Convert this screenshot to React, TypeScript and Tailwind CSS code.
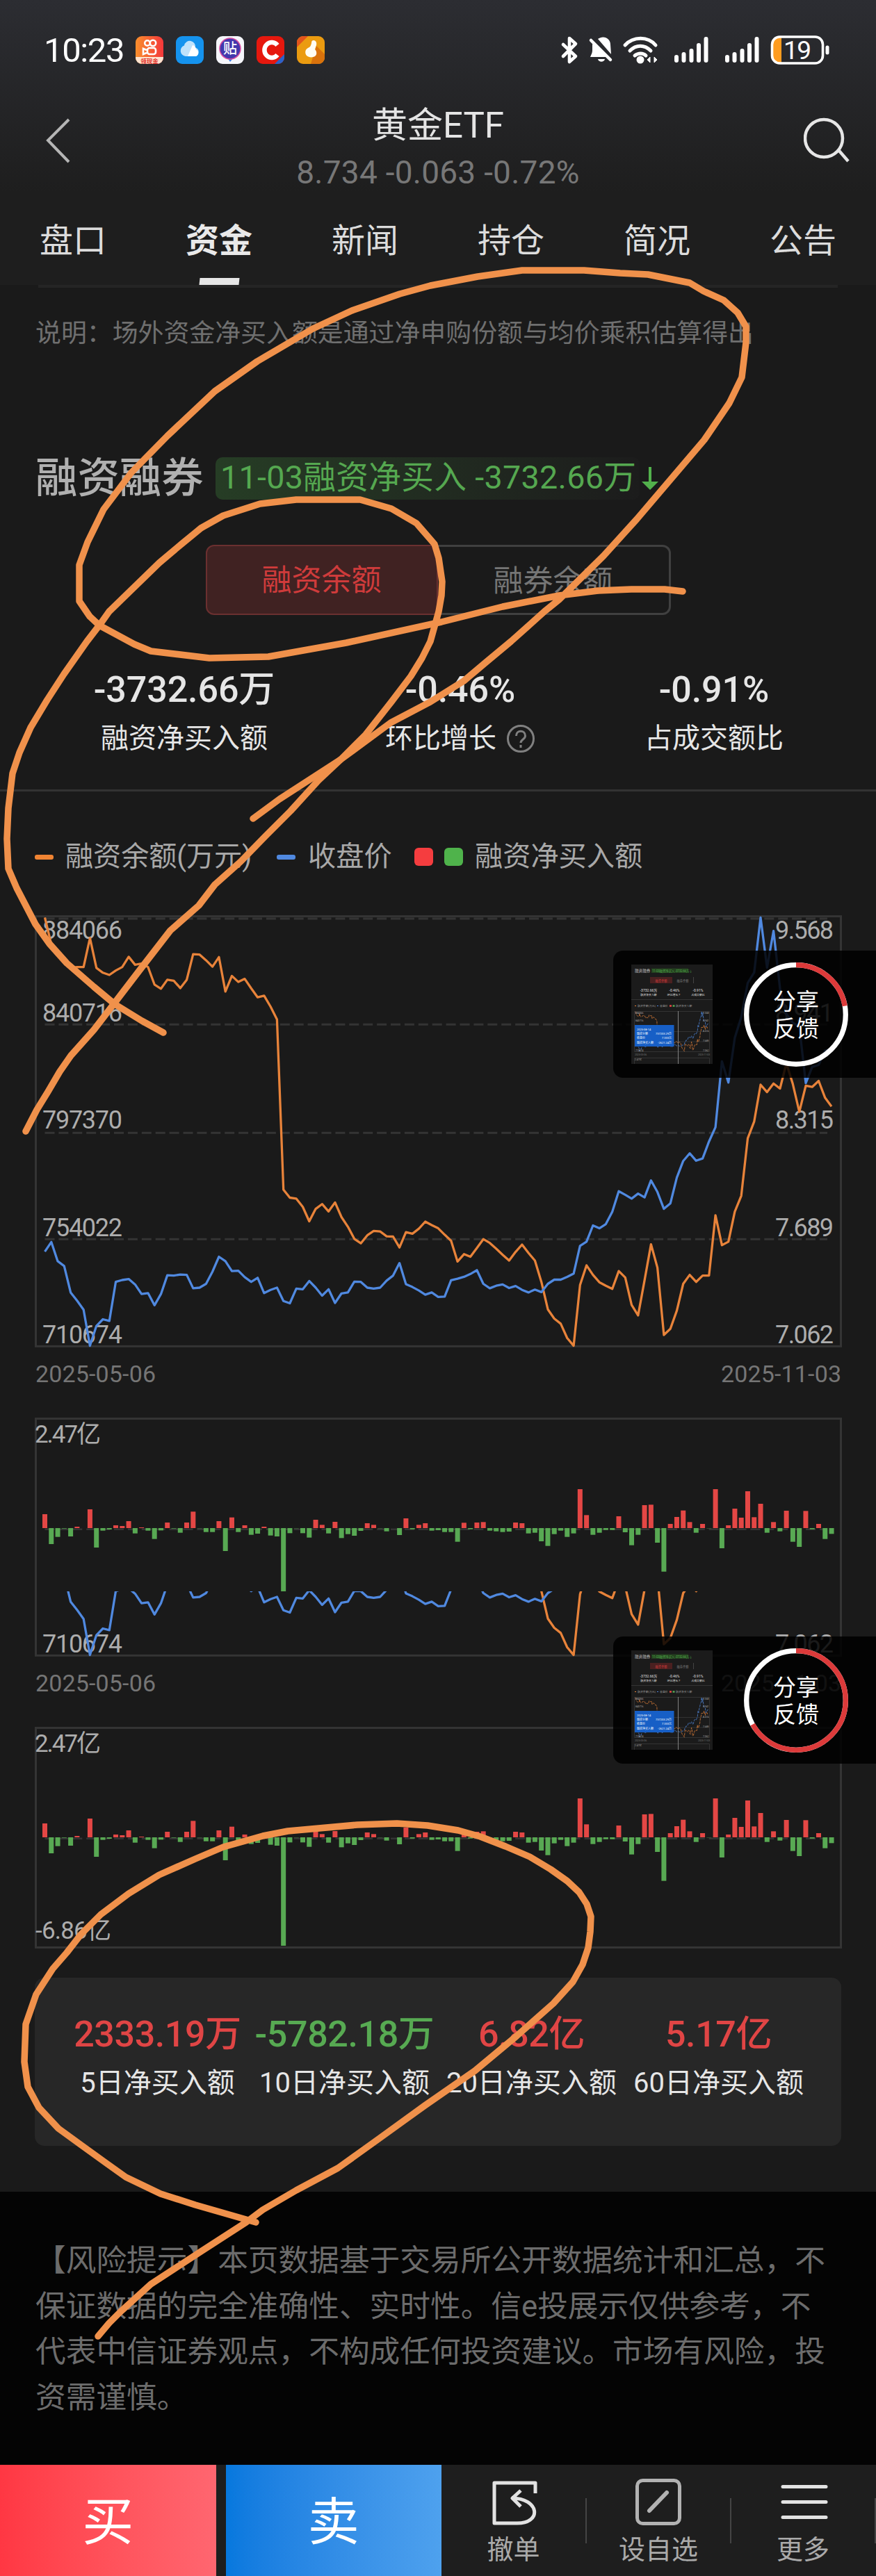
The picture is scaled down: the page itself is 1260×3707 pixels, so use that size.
import type { ReactNode } from 'react'

const ORANGE = '#e8833a'
const BLUE = '#5089e0'
const GRID = '#343434'

// plot levels, one per trading day, measured down from the top of the chart
const marginBalance = [
  88, 172, 205, 226, 246, 243, 243, 152, 246, 261, 268, 254, 243, 211, 236, 232, 243, 298, 311, 283, 286,
  309, 283, 203, 204, 222, 242, 212, 320, 271, 290, 280, 310, 338, 333, 367, 407, 941, 966, 969, 995, 1040,
  1001, 986, 1009, 981, 1027, 1057, 1095, 1109, 1084, 1070, 1072, 1087, 1088, 1122, 1074, 1079, 1063, 1041,
  1052, 1062, 1082, 1101, 1166, 1143, 1151, 1124, 1096, 1108, 1126, 1145, 1163, 1136, 1113, 1139, 1163,
  1230, 1316, 1345, 1361, 1406, 1430, 1240, 1178, 1208, 1231, 1242, 1252, 1196, 1216, 1302, 1335, 1225,
  1112, 1185, 1396, 1377, 1320, 1236, 1208, 1230, 1210, 1210, 1021, 1115, 1104, 1010, 960, 780, 727, 612,
  635, 608, 624, 545, 610, 697, 615, 619, 600, 653, 680,
]

const closePrice = [
  1135, 1105, 1165, 1180, 1263, 1289, 1317, 1430, 1368, 1347, 1352, 1230, 1224, 1221, 1238, 1268, 1265,
  1303, 1268, 1209, 1210, 1207, 1208, 1250, 1248, 1236, 1198, 1151, 1165, 1196, 1195, 1215, 1230, 1217,
  1265, 1255, 1248, 1290, 1297, 1251, 1253, 1227, 1248, 1273, 1253, 1296, 1266, 1263, 1229, 1230, 1248,
  1251, 1248, 1226, 1210, 1171, 1237, 1246, 1257, 1270, 1263, 1277, 1276, 1225, 1220, 1214, 1205, 1193,
  1236, 1250, 1242, 1238, 1249, 1243, 1255, 1263, 1254, 1262, 1236, 1223, 1223, 1214, 1204, 1117, 1104,
  1053, 1062, 1049, 1010, 946, 957, 969, 953, 965, 912, 948, 1001, 984, 903, 851, 827, 850, 843, 790, 745,
  539, 605, 465, 400, 293, 260, 88, 245, 130, 310, 390, 418, 430, 607, 556, 550, 505, 500,
]

const netBuy = [
  60, -69, -38, -2, -36, 6, 0, 81, -84, -11, -6, 12, 9, 30, -23, 3, -11, -47, -10, 24, -2, -20, 24, 71, -1,
  -17, -17, 30, -99, 46, -17, 12, -29, -24, 6, -32, -36, -468, -22, -1, -22, -41, 36, 14, -23, 27, -43, -26,
  -33, -12, 21, 14, -1, -14, 0, -30, 42, -5, 14, 21, -11, -9, -17, -17, -59, 23, -5, 24, 26, -11, -14, -17,
  -15, 24, 21, -23, -20, -57, -77, -26, -11, -38, -23, 168, 56, -29, -20, -8, -8, 51, -18, -74, -29, 99,
  101, -63, -188, 18, 48, 76, 26, -20, 18, -1, 168, -87, 12, 84, 45, 159, 47, 105, -20, 26, -14, 75, -59,
  -81, 74, -5, 18, -47, -25,
]

const axisLabels = [
  { left: '884066', right: '9.568', y: 70.5 },
  { left: '840716', right: '8.941', y: 190 },
  { left: '797370', right: '8.315', y: 343.5 },
  { left: '754022', right: '7.689', y: 498.5 },
  { left: '710674', right: '7.062', y: 652.5 },
]

const tabs = ['盘口', '资金', '新闻', '持仓', '简况', '公告']

const summary = [
  { value: '2333.19万', label: '5日净买入额', up: true },
  { value: '-5782.18万', label: '10日净买入额', up: false },
  { value: '6.82亿', label: '20日净买入额', up: true },
  { value: '5.17亿', label: '60日净买入额', up: true },
]

const riskLines = [
  '【风险提示】本页数据基于交易所公开数据统计和汇总，不',
  '保证数据的完全准确性、实时性。信e投展示仅供参考，不',
  '代表中信证券观点，不构成任何投资建议。市场有风险，投',
  '资需谨慎。',
]

const marks = [
  '364,1178 402,1150 490,1093 562,1040 619,1010 667,980 699,953 735,923 783,880 804,863 868,800 916,747 956,700 1013,633 1049,580 1067,543 1073,493 1073,470 1061,450 1041,432 1012,419 992,407 932,395 892,393 840,389 751,389 687,398 619,411 575,423 506,447 450,473 370,520 309,563 241,627 189,680 149,733 126,780 114,813 114,865 129,887 143,900 193,927 217,937 301,947 386,945 498,925 635,895 723,873 804,857 860,850 908,848 956,848 982,851',
  '37,1628 53,1597 69,1571 86,1542 102,1519 135,1482 165,1443 204,1392 245,1339 286,1303 309,1273 346,1240 382,1203 418,1167 458,1123 490,1093 526,1057 563,1010 591,973 607,947 619,923 631,880 635,857 636,837 631,803 625,783 599,753 563,732 518,719 426,719 374,725 321,742 289,760 261,783 229,810 193,845 157,880 145,897 125,923 92,970 68,1007 44,1047 28,1083 18,1113 12,1163 10,1207 12,1250 24,1278 37,1303 51,1330 71,1358 96,1386 135,1420 165,1445 204,1469 235,1486',
  '368,3198 281,3173 231,3157 181,3133 153,3113 117,3087 84,3063 56,3033 40,3003 35,2967 37,2913 52,2870 76,2833 96,2810 117,2783 145,2755 185,2725 229,2698 281,2675 321,2658 378,2642 414,2635 514,2626 571,2624 615,2627 659,2634 691,2643 727,2657 762,2672 792,2690 816,2707 833,2723 844,2740 850,2758 849,2780 846,2803 838,2827 824,2852 796,2883 743,2930 683,2980 611,3030 546,3077 486,3120 426,3152 378,3180 354,3198 289,3240 217,3287 173,3327 157,3343 141,3362',
]

const dayX = (index: number) => 64.5 + index * 9.275

const toPoints = (levels: number[]) =>
  levels.map((level, index) => `${dayX(index).toFixed(1)},${(level / 2.178).toFixed(1)}`).join(' ')

function StatusBar() {
  return (
    <div className="flex h-[120px] items-start pt-[44px] pr-[67px] pl-[63px]">
      <div className="w-[132px] text-[49px] leading-[58px] tracking-[-1.4px] text-white">10:23</div>
      <div className="mt-2 flex gap-[18px]">
        <svg width="40" height="40" viewBox="0 0 40 40">
          <defs>
            <linearGradient id="ks" x1="0" y1="0" x2="1" y2="0">
              <stop offset="0" stopColor="#f98f2c" />
              <stop offset="1" stopColor="#f4373b" />
            </linearGradient>
          </defs>
          <rect width="40" height="40" rx="9" fill="url(#ks)" />
          <g fill="none" stroke="#fff" strokeWidth="2.6">
            <circle cx="17" cy="10" r="3.8" />
            <circle cx="25" cy="10" r="4.2" />
            <rect x="17" y="17" width="12" height="9" rx="3" />
            <path d="M16 20l-5-2v8l5-2" />
          </g>
          <path d="M0 30h40v1a9 9 0 0 1-9 9H9a9 9 0 0 1-9-9z" fill="#fde3cf" />
          <text x="20" y="38.5" fontSize="8.5" fontWeight="700" fill="#e2322b" textAnchor="middle">
            领现金
          </text>
        </svg>
        <svg width="40" height="40" viewBox="0 0 40 40">
          <rect width="40" height="40" rx="9" fill="#1593ee" />
          <path d="M14 29a8 8 0 0 1-2-15.500a8 8 0 0 1 16 3a6.500 6.500 0 0 1 0 12.500z" fill="#bfe2fb" />
          <path d="M17 29l7-16a7 7 0 0 1 5 6a5.500 5.500 0 0 1 0 10z" fill="#fff" />
        </svg>
        <svg width="40" height="40" viewBox="0 0 40 40">
          <rect width="40" height="40" rx="9" fill="#f5f6fb" />
          <path d="M16 31h9l-5 6z" fill="#3f7be6" />
          <circle cx="20" cy="18" r="15" fill="#4338ad" stroke="#d84ea0" strokeWidth="1.5" />
          <text x="20" y="25" fontSize="20" fontWeight="500" fill="#fff" textAnchor="middle">
            贴
          </text>
        </svg>
        <svg width="40" height="40" viewBox="0 0 40 40">
          <rect width="40" height="40" rx="9" fill="#e6180e" />
          <path d="M40 26v5a9 9 0 0 1-9 9h-5z" fill="#2b62c9" />
          <path d="M30 13a10.500 11 0 1 0 0 14" fill="none" stroke="#fff" strokeWidth="6.500" />
        </svg>
        <svg width="40" height="40" viewBox="0 0 40 40">
          <rect width="40" height="40" rx="9" fill="#eb9b10" />
          <path d="M28 14l12 12v5a9 9 0 0 1-9 9H20z" fill="#d9720c" />
          <path d="M0 16V9a9 9 0 0 1 9-9h7z" fill="#e2541c" />
          <path
            d="M24 6c3 0 5 3 4 7l-2 6c3 3 3 8 0 10s-9 2-12-1c-3-4-2-9 2-11c3-1 4-3 5-7c0-3 1-4 3-4z"
            fill="#fffdf3"
          />
        </svg>
      </div>
      <svg className="mt-[6px] ml-auto" width="390" height="46" viewBox="0 0 390 46">
        <path
          d="M7 14l18 17l-9 8V5l9 8L7 31"
          fill="none"
          stroke="#fff"
          strokeWidth="4.600"
          strokeLinejoin="round"
          strokeLinecap="round"
        />
        <path d="M49 13v9c0 5-2 7-3 10h26zM57 6c8-6 18-1 18 8l1 14z" fill="#fff" />
        <path d="M57 35h10c-1 5-9 5-10 0z" fill="#fff" />
        <path d="M47 8l28 28" stroke="#fff" strokeWidth="4.500" strokeLinecap="round" />
        <g fill="none" stroke="#fff" strokeWidth="5" strokeLinecap="round">
          <path d="M96 15c12-13 33-13 44 0" />
          <path d="M103 23c9-9 21-9 30 0" />
          <path d="M110 30c5-4 12-4 16 0" />
        </g>
        <circle cx="118" cy="36" r="5.500" fill="#fff" />
        <path d="M128 36l4-4v8zM142 36l-4-4v8z" fill="#fff" stroke="#fff" />
        <g stroke="#fff" strokeWidth="6" strokeLinecap="round">
          <path d="M170 32v5M180.500 28v9M191.500 23v14M202 15v22M212.500 6v31" />
          <path d="M243 32v5M253.500 28v9M264.500 23v14M275 15v22M285.500 6v31" />
        </g>
        <path d="M321 4h-5a7 7 0 0 0-7 7v22a7 7 0 0 0 7 7h5z" fill="#ff9c1f" />
        <rect x="307.500" y="3" width="73" height="38" rx="11" fill="none" stroke="#fff" strokeWidth="3.600" />
        <path d="M387 18v8" stroke="#fff" strokeWidth="5" strokeLinecap="round" />
        <text x="324" y="35" fontSize="37" fill="#fff" textLength="40">
          19
        </text>
      </svg>
    </div>
  )
}

function Header() {
  return (
    <div className="flex h-[157px] justify-between pt-[30px] pr-[36px] pl-[64px]">
      <svg className="mt-[18px]" width="40" height="70" viewBox="0 0 40 70">
        <path d="M35 4L5 34l30 31" fill="none" stroke="#b5b5b5" strokeWidth="4" />
      </svg>
      <div className="flex flex-col items-center gap-[7px]">
        <h1 className="text-[51px] leading-[61px] text-[#e4e4e4]">黄金ETF</h1>
        <p className="text-[46px] leading-[60px] tracking-[0.25px] text-[#777777]">8.734 -0.063 -0.72%</p>
      </div>
      <svg className="mt-[16px]" width="68" height="72" viewBox="0 0 68 72">
        <circle cx="29" cy="33" r="27" fill="none" stroke="#e6e6e6" strokeWidth="4.500" />
        <path d="M51 51l13 15" stroke="#e6e6e6" strokeWidth="4.500" />
      </svg>
    </div>
  )
}

function Tabs() {
  return (
    <div className="grid h-[133px] grid-cols-6 bg-[#1e1e1e] pt-[40px]">
      {tabs.map((tab) => (
        <div key={tab} className="flex flex-col items-center">
          <span
            className={`text-[48px] leading-[60px] ${
              tab === '资金' ? 'font-bold text-[#e9e9e9]' : 'text-[#dcdcdc]'
            }`}
          >
            {tab}
          </span>
          {tab === '资金' && <span className="mt-[23px] h-[10px] w-[57px] -skew-x-6 bg-[#e6e6e6]" />}
        </div>
      ))}
    </div>
  )
}

function Stat({ value, children }: { value: string; children: ReactNode }) {
  return (
    <div className="flex flex-col items-center gap-[10px] text-[#e6e6e6]">
      <span className="text-[52px] leading-[60px] font-medium tracking-[-0.100px]">{value}</span>
      <span className="flex items-center text-[40px] leading-[60px] whitespace-nowrap">{children}</span>
    </div>
  )
}

function Legend() {
  return (
    <div className="mt-[64px] flex h-[60px] items-center pl-[50px] text-[40.2px] leading-[60px] whitespace-nowrap text-[#a8a8a8]">
      <span className="h-[7px] w-[27px] rounded-[3px] bg-[#f08433]" />
      <span className="ml-[17px] w-[304px] tracking-[-0.1px]">融资余额(万元)</span>
      <span className="h-[7px] w-[27px] rounded-[3px] bg-[#5089e0]" />
      <span className="ml-[18px] w-[153px]">收盘价</span>
      <span className="h-[26px] w-[27px] rounded-[6px] bg-[#f53d3f]" />
      <span className="ml-[16px] h-[26px] w-[27px] rounded-[6px] bg-[#4fb34b]" />
      <span className="ml-[17px]">融资净买入额</span>
    </div>
  )
}

function PriceChart({ from = 0 }: { from?: number }) {
  const height = 720 - from
  return (
    <svg className="block" width="1260" height={height} viewBox={`0 ${from} 1260 ${height}`}>
      <rect x="51.500" y="38.600" width="1158" height="618.800" fill="none" stroke={GRID} strokeWidth="3" />
      {[42, 194.2, 350.3, 503.2].map((y) => (
        <path key={y} d={`M64.500 ${y}H1190`} stroke={GRID} strokeWidth="3" strokeDasharray="14 5.900" />
      ))}
      <g fontSize="36" fill="#adadad">
        {axisLabels
          .filter((label) => label.y > from)
          .map(({ left, right, y }) => (
            <g key={left}>
              <text x="61" y={y} textLength="115">
                {left}
              </text>
              <text x="1115" y={y} textLength="84">
                {right}
              </text>
            </g>
          ))}
      </g>
      <g fontSize="34" fill="#757575">
        <text x="51" y="708.500" textLength="173">
          2025-05-06
        </text>
        <text x="1037" y="708.500" textLength="173">
          2025-11-03
        </text>
      </g>
      <polyline points={toPoints(marginBalance)} fill="none" stroke={ORANGE} strokeWidth="3.300" strokeLinejoin="round" />
      <polyline points={toPoints(closePrice)} fill="none" stroke={BLUE} strokeWidth="3.300" strokeLinejoin="round" />
    </svg>
  )
}

function NetBuyChart({ height }: { height: number }) {
  return (
    <svg className="block" width="1260" height={height} viewBox={`0 0 1260 ${height}`}>
      <rect x="51.500" y="41.500" width="1158" height="316" fill="none" stroke={GRID} strokeWidth="3" />
      <path d="M64.500 200.700H1190" stroke={GRID} strokeWidth="2.500" strokeDasharray="14 5.900" />
      {netBuy.map((amount, index) => (
        <rect
          key={index}
          x={dayX(index) - 3.5}
          y={amount > 0 ? 199 - amount / 3 : 199}
          width="7"
          height={Math.abs(amount) / 3}
          fill={amount > 0 ? '#e44745' : '#58a953'}
        />
      ))}
      <g fontSize="35" fill="#adadad">
        <text x="50" y="76" textLength="95">
          2.47亿
        </text>
        {height > 345 && (
          <text x="51" y="345" textLength="109">
            -6.86亿
          </text>
        )}
      </g>
    </svg>
  )
}

function Thumbnail() {
  return (
    <svg width="117" height="143" viewBox="0 0 117 143">
      <rect width="117" height="143" fill="#1b1b1b" />
      <text x="5" y="11" fontSize="5.600" fill="#bbb">
        融资融券
      </text>
      <rect x="29" y="5.500" width="53" height="6.500" fill="#24401f" />
      <text x="30" y="11" fontSize="4.700" fill="#4fa64a" textLength="58">
        11-03融资净买入 -3732.66万↓
      </text>
      <rect x="27" y="18" width="32" height="9" fill="#4a2020" />
      <text x="43" y="24.500" fontSize="4.200" fill="#cf3b3b" textAnchor="middle">
        融资余额
      </text>
      <text x="74" y="24.500" fontSize="4.200" fill="#777" textAnchor="middle">
        融券余额
      </text>
      <path d="M89.500 18v9" stroke="#444" />
      <g fontSize="5" fill="#e0e0e0" textAnchor="middle">
        <text x="25" y="39">-3732.66万</text>
        <text x="62" y="39">-0.46%</text>
        <text x="96" y="39">-0.91%</text>
        <g fontSize="3.900">
          <text x="25" y="45">融资净买入额</text>
          <text x="61" y="45">环比增长 ?</text>
          <text x="96" y="45">占成交额比</text>
        </g>
      </g>
      <path d="M0 50.500h117" stroke="#333" />
      <path d="M5 59.500h2" stroke={ORANGE} />
      <path d="M37 59.500h2" stroke={BLUE} />
      <path d="M55 59.500h3" stroke="#e44745" strokeWidth="2.500" />
      <path d="M59.500 59.500h3" stroke="#58a953" strokeWidth="2.500" />
      <g fontSize="3.900" fill="#999">
        <text x="9" y="61">融资余额(万元)</text>
        <text x="41" y="61">收盘价</text>
        <text x="64" y="61">融资净买入额</text>
      </g>
      <path d="M4.500 67.500h108v58H4.500zM4.500 143v-8.500h108v8.500M4 96.500h108M4 111h108" fill="none" stroke="#333" />
      <g transform="translate(0 64) scale(.0925)" fill="none" strokeWidth="8" strokeDasharray="40 14">
        <polyline points={toPoints(marginBalance)} stroke={ORANGE} />
        <polyline points={toPoints(closePrice)} stroke={BLUE} />
      </g>
      <g fontSize="3.400" fill="#aaa">
        <text x="6" y="71">884066</text>
        <text x="6" y="82">840716</text>
        <text x="6" y="125">710674</text>
        <text x="103" y="71">9.568</text>
        <text x="103" y="82">8.941</text>
        <text x="103" y="97">8.315</text>
        <text x="103" y="111">7.689</text>
        <text x="103" y="125">7.062</text>
        <text x="5" y="138">2.47亿</text>
        <g fill="#777">
          <text x="5" y="131">2025-05-06</text>
          <text x="96" y="131">2025-11-03</text>
        </g>
      </g>
      <path d="M67.500 67v76" stroke="#808080" />
      <rect x="5" y="87" width="56.500" height="31" fill="#175fc6" />
      <g fontSize="4" fill="#fff">
        <text x="8" y="94.500">2025-08-14</text>
        <text x="8" y="101">融资余额</text>
        <text x="8" y="107">收盘价</text>
        <text x="8" y="113.500">融资净买入额</text>
        <g textAnchor="end">
          <text x="58" y="101">737203.29万</text>
          <text x="58" y="107">7.333元</text>
          <text x="58" y="113.500">-2621.24万</text>
        </g>
      </g>
    </svg>
  )
}

function SharePanel({ className, progress }: { className: string; progress: number }) {
  return (
    <div
      className={`absolute right-0 flex h-[183px] w-[378px] items-center rounded-l-[14px] bg-black/85 pl-[26px] ${className}`}
    >
      <Thumbnail />
      <div className="relative ml-[45px] size-[150px]">
        <svg className="absolute inset-0 -rotate-90" width="150" height="150" viewBox="0 0 150 150">
          <circle cx="75" cy="75" r="71.300" fill="none" stroke="#fff" strokeWidth="7.300" />
          <circle
            cx="75"
            cy="75"
            r="71.300"
            fill="none"
            stroke="#dc3a3a"
            strokeWidth="7.300"
            pathLength="360"
            strokeDasharray={`${progress} 360`}
          />
        </svg>
        <div className="flex size-full flex-col items-center justify-center pt-[2px] text-[33px] leading-[39px] text-white">
          <span>分享</span>
          <span>反馈</span>
        </div>
      </div>
    </div>
  )
}

function BottomBar() {
  return (
    <div className="flex h-[160px] bg-[#1e1e1e]">
      <div className="flex w-[311px] items-center justify-center bg-linear-to-r from-[#ff3743] to-[#ff6670] pt-[5px] text-[74px] text-white">
        买
      </div>
      <div className="ml-[14px] flex w-[311px] items-center justify-center bg-linear-to-r from-[#0678de] to-[#4ea1ee] pt-[5px] text-[74px] text-white">
        卖
      </div>
      <div className="flex flex-1 text-[38px] text-[#aaaaaa]">
        <div className="flex w-[207px] flex-col items-center">
          <svg className="mt-[20px] ml-[5px]" width="70" height="70" viewBox="0 0 70 70">
            <path
              d="M64 21V6H5v58h33c36 0 32-36-8-36M43 17L31 28l12 12"
              fill="none"
              stroke="#e2e2e2"
              strokeWidth="5"
              strokeLinejoin="round"
            />
          </svg>
          <span className="mt-[7px] leading-[50px]">撤单</span>
        </div>
        <span className="mt-[48px] h-[65px] w-[2px] bg-[#444444]" />
        <div className="flex w-[206px] flex-col items-center">
          <svg className="mt-[20px]" width="70" height="70" viewBox="0 0 70 70">
            <rect x="4.500" y="2.500" width="61" height="62" rx="8" fill="none" stroke="#b2b2b2" strokeWidth="5" />
            <path d="M22 46l25-26" stroke="#b2b2b2" strokeWidth="6" strokeLinecap="round" />
          </svg>
          <span className="mt-[7px] leading-[50px]">设自选</span>
        </div>
        <span className="mt-[48px] h-[65px] w-[2px] bg-[#444444]" />
        <div className="flex w-[206px] flex-col items-center">
          <svg className="mt-[20px] ml-[3px]" width="70" height="70" viewBox="0 0 70 70">
            <path d="M4 11.500h62M4 33.500h62M4 55.500h62" stroke="#e2e2e2" strokeWidth="5" strokeLinecap="round" />
          </svg>
          <span className="mt-[7px] leading-[50px]">更多</span>
        </div>
        <span className="mt-[48px] h-[65px] w-[2px] bg-[#444444]" />
      </div>
    </div>
  )
}

export default function App() {
  return (
    <div className="relative h-[3707px] w-[1260px] overflow-hidden bg-[#1a1a1a] font-['Roboto','Noto_Sans_CJK_SC',sans-serif]">
      <div className="bg-linear-to-b from-[#2c2d32] to-[#1e1e1e]">
        <StatusBar />
        <Header />
      </div>
      <Tabs />

      <div className="mx-[55px] h-[4px] bg-[#252525]" />
      <p className="mt-[42px] h-[48px] pl-[51px] text-[36.9px] leading-[48px] whitespace-nowrap text-[#6f6f6f]">
        说明：场外资金净买入额是通过净申购份额与均价乘积估算得出
      </p>

      <div className="mt-[154px] flex h-[61px] items-center pl-[51px] whitespace-nowrap">
        <h2 className="w-[259px] text-[60.4px] leading-[61px] font-medium text-[#b0b0b0]">融资融券</h2>
        <span className="h-[61px] w-[610px] rounded-[10px] bg-linear-to-r from-[#263d25] to-[#1c1c1c] pl-[7px] text-[46.7px] leading-[58px] tracking-[0.300px] text-[#55a850]">
          11-03融资净买入 -3732.66万
        </span>
        <svg className="-mt-[2px] ml-[2px]" width="26" height="36" viewBox="0 0 26 36">
          <path d="M13 2v24" stroke="#52b04c" strokeWidth="4" />
          <path d="M1 23h24L13 35z" fill="#52b04c" />
        </svg>
      </div>

      <div className="mx-auto mt-[65px] flex h-[101px] w-[669px] text-[43px] leading-[99px]">
        <div className="w-[334px] rounded-l-[12px] border-2 border-[#6b3030] bg-[#402222] text-center text-[#cf3b3b]">
          融资余额
        </div>
        <div className="flex-1 rounded-r-[12px] border-3 border-l-0 border-[#404040] text-center text-[#757575]">
          融券余额
        </div>
      </div>

      <div className="mt-[78px] grid grid-cols-[404px_390px_340px] pl-[63px]">
        <Stat value="-3732.66万">融资净买入额</Stat>
        <Stat value="-0.46%">
          环比增长
          <svg className="ml-[14px]" width="42" height="42" viewBox="0 0 42 42">
            <circle cx="21" cy="21" r="18.500" fill="none" stroke="#808080" strokeWidth="3" />
            <path
              d="M14.500 17c0-9 13-9 13 0c0 5-6.500 5-6.500 10M21 30v4"
              fill="none"
              stroke="#808080"
              strokeWidth="3"
            />
          </svg>
        </Stat>
        <Stat value="-0.91%">占成交额比</Stat>
      </div>

      <div className="mt-[43px] h-[3px] bg-[#333333]" />
      <Legend />

      <div className="mt-[17px]">
        <PriceChart />
        <NetBuyChart height={290} />
        <PriceChart from={565} />
        <NetBuyChart height={390} />
      </div>

      <div className="mx-[50px] mt-[11px] grid h-[242px] grid-cols-[269px_269px_269px_269px] rounded-[14px] bg-[#272727] pt-[52px] pl-[42px]">
        {summary.map((item) => (
          <div key={item.label} className="flex flex-col items-center gap-[10px] whitespace-nowrap">
            <span
              className={`text-[52px] leading-[60px] font-medium tracking-[-0.400px] ${
                item.up ? 'text-[#e04545]' : 'text-[#57aa52]'
              }`}
            >
              {item.value}
            </span>
            <span className="text-[40px] leading-[60px] text-[#e6e6e6]">{item.label}</span>
          </div>
        ))}
      </div>

      <div className="mt-[66px] h-[393px] bg-[#040404] pt-[67px] pl-[51px] text-[43.7px] leading-[65.7px] whitespace-nowrap text-[#6c6c6c]">
        {riskLines.map((line) => (
          <p key={line}>{line}</p>
        ))}
      </div>
      <BottomBar />

      <SharePanel className="top-[1368px]" progress={80} />
      <SharePanel className="top-[2355px]" progress={241} />

      <svg className="pointer-events-none absolute inset-0" width="1260" height="3707" viewBox="0 0 1260 3707">
        {marks.map((points) => (
          <polyline
            key={points}
            points={points}
            fill="none"
            stroke="#f0914b"
            strokeWidth="9.500"
            strokeLinecap="round"
            strokeLinejoin="round"
          />
        ))}
      </svg>
    </div>
  )
}
